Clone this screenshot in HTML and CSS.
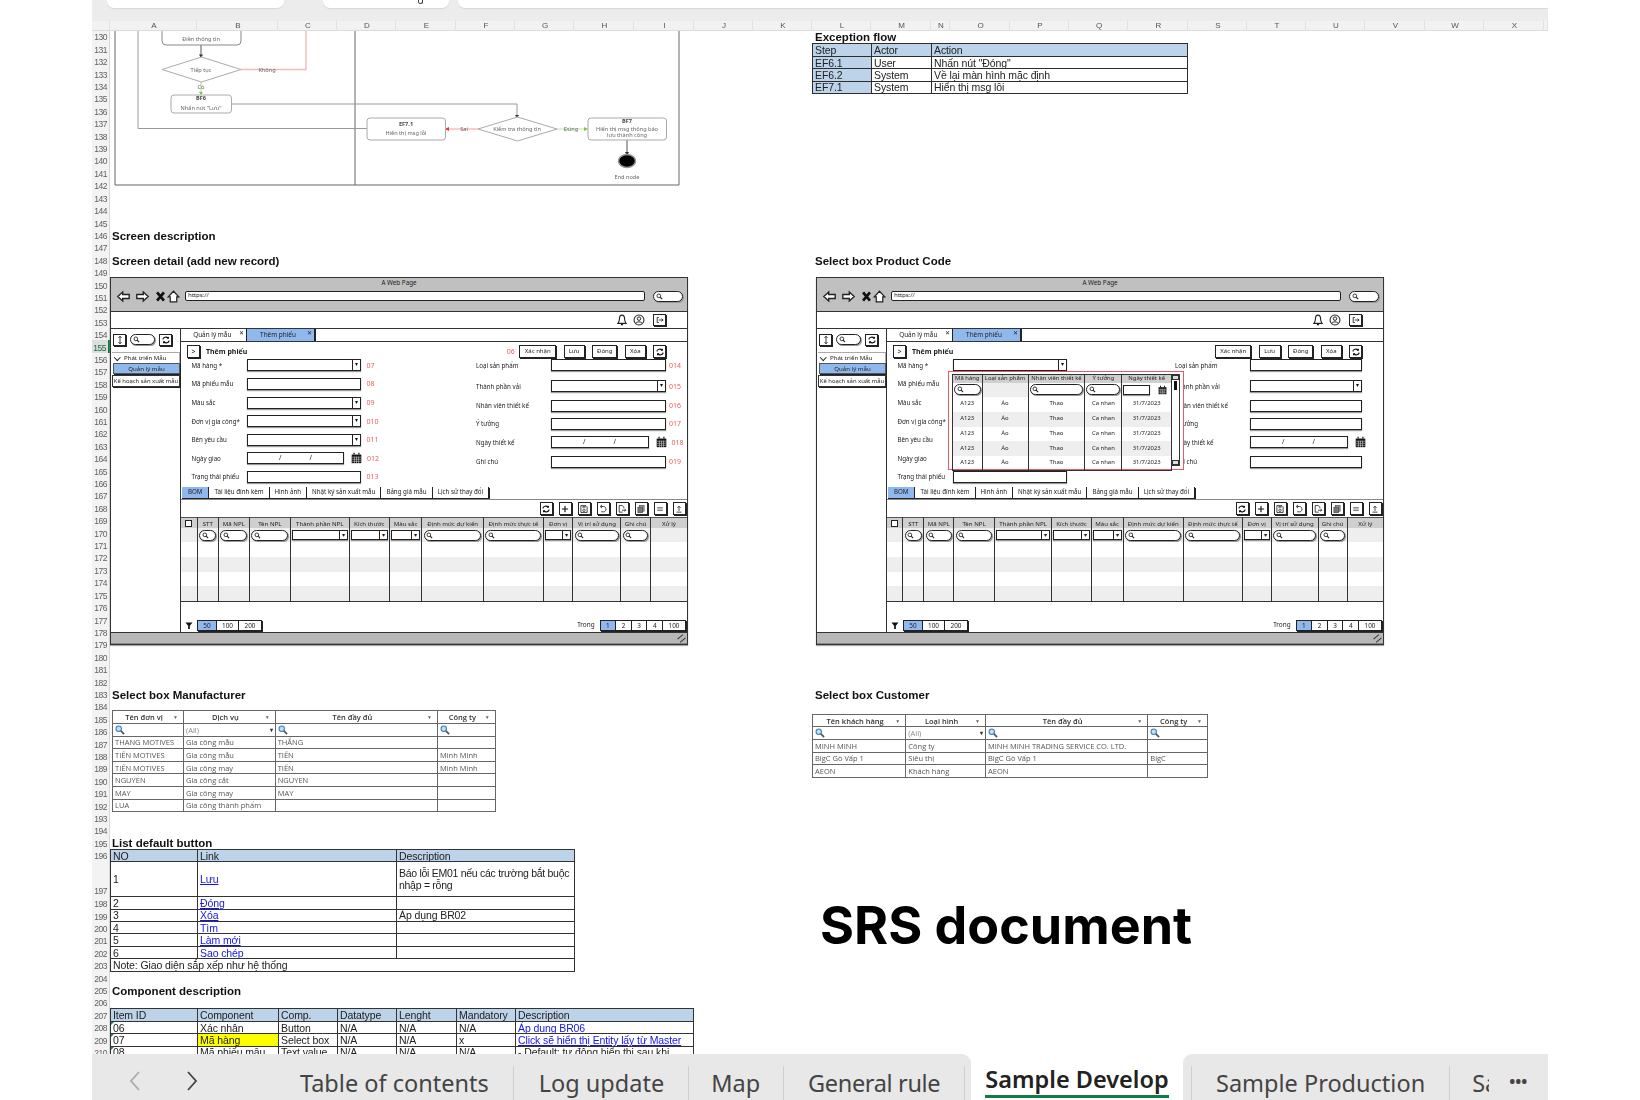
FILE: index.html
```html
<!DOCTYPE html>
<html lang="vi">
<head>
<meta charset="utf-8">
<title>SRS document</title>
<link rel="stylesheet" href="styles.css">
</head>
<body>
<svg class="sprite" xmlns="http://www.w3.org/2000/svg">
  <symbol id="i-left" viewBox="0 0 16 16"><path d="M1 8 7 2.500V5.500H15V10.500H7V13.500Z" fill="#fff" stroke="#222" stroke-width="1.700"/></symbol>
  <symbol id="i-right" viewBox="0 0 16 16"><path d="M15 8 9 2.500V5.500H1V10.500H9V13.500Z" fill="#fff" stroke="#222" stroke-width="1.700"/></symbol>
  <symbol id="i-x" viewBox="0 0 16 16"><path d="M3 2 13 14M13 2 3 14" stroke="#111" stroke-width="4" fill="none"/></symbol>
  <symbol id="i-home" viewBox="0 0 16 16"><path d="M8 1.500 14.500 8.500H12V14.500H4V8.500H1.500Z" fill="#fff" stroke="#222" stroke-width="1.500"/></symbol>
  <symbol id="i-search" viewBox="0 0 16 16"><circle cx="6.500" cy="6.500" r="4.200" fill="none" stroke="#222" stroke-width="2"/><path d="M9.500 9.500 14 14" stroke="#222" stroke-width="2.600"/></symbol>
  <symbol id="i-bell" viewBox="0 0 16 16"><path d="M8 1.500C5 1.500 4.500 4 4.500 7 4.500 10 3.500 11 2.500 12.500H13.500C12.500 11 11.500 10 11.500 7 11.500 4 11 1.500 8 1.500ZM6.500 14.200H9.500" fill="#fff" stroke="#222" stroke-width="1.500"/></symbol>
  <symbol id="i-user" viewBox="0 0 16 16"><circle cx="8" cy="8" r="6.600" fill="#fff" stroke="#222" stroke-width="1.400"/><circle cx="8" cy="6.200" r="2.300" fill="none" stroke="#222" stroke-width="1.300"/><path d="M3.800 12.500C5 9.800 11 9.800 12.200 12.500" fill="none" stroke="#222" stroke-width="1.300"/></symbol>
  <symbol id="i-logout" viewBox="0 0 16 16"><path d="M6 4H3.500V12H6" fill="none" stroke="#222" stroke-width="1.400"/><path d="M6 8H13M10.500 5.500 13 8 10.500 10.500" fill="none" stroke="#222" stroke-width="1.400"/></symbol>
  <symbol id="i-refresh" viewBox="0 0 16 16"><path d="M3 7C3.500 3.800 8.500 1.800 11.500 5M13 9C12.500 12.200 7.500 14.200 4.500 11" fill="none" stroke="#111" stroke-width="2"/><path d="M12.800 2.200V6H9ZM3.200 13.800V10H7Z" fill="#111"/></symbol>
  <symbol id="i-updown" viewBox="0 0 16 16"><path d="M8 2V14M5.500 4.500 8 2 10.500 4.500M5.500 11.500 8 14 10.500 11.500" fill="none" stroke="#222" stroke-width="1.400"/></symbol>
  <symbol id="i-cal" viewBox="0 0 16 16"><path d="M1 3H15V15.500H1Z" fill="#111"/><path d="M4.500 .5V3M11.500 .5V3" stroke="#111" stroke-width="1.800"/><path d="M1.500 6.800H14.500M1.500 9.800H14.500M1.500 12.800H14.500M5 6V15.500M8 6V15.500M11 6V15.500" stroke="#ddd" stroke-width=".8"/></symbol>
  <symbol id="i-plus" viewBox="0 0 16 16"><path d="M8 3V13M3 8H13" stroke="#111" stroke-width="1.800"/></symbol>
  <symbol id="i-save" viewBox="0 0 16 16"><path d="M3 2.500H11L13 4.500V13.500H3Z" fill="none" stroke="#222" stroke-width="1.300"/><rect x="5.500" y="2.500" width="5" height="3.500" fill="#666"/><circle cx="8" cy="10" r="2" fill="none" stroke="#222" stroke-width="1.200"/></symbol>
  <symbol id="i-undo" viewBox="0 0 16 16"><path d="M4.500 4H9C14 4 14 12.500 9 12.500H5" fill="none" stroke="#222" stroke-width="1.300"/><path d="M6.500 1.500 3.500 4 6.500 6.500" fill="none" stroke="#222" stroke-width="1.300"/></symbol>
  <symbol id="i-export" viewBox="0 0 16 16"><path d="M9 13H3.500V2.500H8.500L11 5V7" fill="none" stroke="#222" stroke-width="1.300"/><path d="M8 10H14M12 8 14 10 12 12" fill="none" stroke="#222" stroke-width="1.300"/></symbol>
  <symbol id="i-copy" viewBox="0 0 16 16"><rect x="5.500" y="2.500" width="7.500" height="9" fill="#999" stroke="#444"/><rect x="3" y="5" width="7.500" height="9" fill="#777" stroke="#444"/></symbol>
  <symbol id="i-list" viewBox="0 0 16 16"><path d="M3.500 5.500H12.500M3.500 8H12.500M3.500 10.500H12.500" stroke="#777" stroke-width="1.500"/></symbol>
  <symbol id="i-up" viewBox="0 0 16 16"><path d="M8 11V3.500M5.500 6 8 3.500 10.500 6M4 13H12" fill="none" stroke="#222" stroke-width="1.300"/></symbol>
  <symbol id="i-funnel" viewBox="0 0 16 16"><path d="M1 2H15L9.700 8.500V15H6.300V8.500Z" fill="#111"/></symbol>
  <symbol id="i-mag" viewBox="0 0 16 16"><circle cx="6" cy="6" r="4.300" fill="#bfe0f5" stroke="#3f7fb8" stroke-width="1.700"/><path d="M9.500 9.500 14.500 14.500" stroke="#555" stroke-width="2.800"/></symbol>
</svg>

<div class="frame">
  <div class="ribbon">
    <div class="rb-box rb-name"></div>
    <div class="rb-box rb-func"><span class="rb-mark"></span></div>
    <div class="rb-box rb-formula"></div>
  </div>

  <div class="cols">
    <span></span><span>A</span><span>B</span><span>C</span><span>D</span><span>E</span><span>F</span><span>G</span><span>H</span><span>I</span><span>J</span><span>K</span><span>L</span><span>M</span><span>N</span><span>O</span><span>P</span><span>Q</span><span>R</span><span>S</span><span>T</span><span>U</span><span>V</span><span>W</span><span>X</span><span></span>
  </div>

  <div class="sheet">
    <div class="rh">130</div><div class="rh">131</div><div class="rh">132</div><div class="rh">133</div><div class="rh">134</div><div class="rh">135</div><div class="rh">136</div><div class="rh">137</div><div class="rh">138</div><div class="rh">139</div>
    <div class="rh">140</div><div class="rh">141</div><div class="rh">142</div><div class="rh">143</div><div class="rh">144</div><div class="rh">145</div><div class="rh">146</div><div class="rh">147</div><div class="rh">148</div><div class="rh">149</div>
    <div class="rh">150</div><div class="rh">151</div><div class="rh">152</div><div class="rh">153</div><div class="rh">154</div><div class="rh rh-sel">155</div><div class="rh">156</div><div class="rh">157</div><div class="rh">158</div><div class="rh">159</div>
    <div class="rh">160</div><div class="rh">161</div><div class="rh">162</div><div class="rh">163</div><div class="rh">164</div><div class="rh">165</div><div class="rh">166</div><div class="rh">167</div><div class="rh">168</div><div class="rh">169</div>
    <div class="rh">170</div><div class="rh">171</div><div class="rh">172</div><div class="rh">173</div><div class="rh">174</div><div class="rh">175</div><div class="rh">176</div><div class="rh">177</div><div class="rh">178</div><div class="rh">179</div>
    <div class="rh">180</div><div class="rh">181</div><div class="rh">182</div><div class="rh">183</div><div class="rh">184</div><div class="rh">185</div><div class="rh">186</div><div class="rh">187</div><div class="rh">188</div><div class="rh">189</div>
    <div class="rh">190</div><div class="rh">191</div><div class="rh">192</div><div class="rh">193</div><div class="rh">194</div><div class="rh">195</div><div class="rh">196</div><div class="rh">197</div><div class="rh">198</div><div class="rh">199</div>
    <div class="rh">200</div><div class="rh">201</div><div class="rh">202</div><div class="rh">203</div><div class="rh">204</div><div class="rh">205</div><div class="rh">206</div><div class="rh">207</div><div class="rh">208</div><div class="rh">209</div>
    <div class="rh">210</div>

    <svg class="block flow" viewBox="110 31 590 160" xmlns="http://www.w3.org/2000/svg">
      <g class="fl-frame">
        <path d="M115 31V185H679V31M355 31V185"/>
      </g>
      <g class="fl-line">
        <path d="M138 31V128.500H367"/>
        <path d="M231.500 104H517V117"/>
      </g>
      <path class="fl-dark" d="M201 45V56M627 140V154"/>
      <path class="fl-pink" d="M241 69.500H306V31"/>
      <path class="fl-pink" d="M478 129H446"/>
      <path class="fl-green" d="M201 82V94M557 129H587"/>
      <path class="fl-tip" d="M199 54.500H203L201 58ZM515 115H519L517 118ZM625 152H629L627 156Z"/>
      <path class="fl-tip-g" d="M199 92H203L201 95ZM584 127V131L588 129Z"/>
      <path class="fl-tip-r" d="M449 127V131L445 129Z"/>
      <g class="fl-shape">
        <path class="fl-box-dark" d="M162 31V41Q162 45 166 45H237Q241 45 241 41V31"/>
        <path d="M162 69.500 201.500 57 241 69.500 201.500 82Z"/>
        <rect x="171" y="95" width="60.500" height="18" rx="3"/>
        <rect x="367" y="118" width="78.500" height="22" rx="3"/>
        <path d="M478 129 517.500 117 557 129 517.500 141Z"/>
        <rect x="588" y="118" width="78.500" height="22" rx="3"/>
      </g>
      <ellipse class="fl-end" cx="627" cy="161" rx="8.500" ry="6.500"/>
      <g class="fl-text">
        <text x="201" y="40.500">Điền thông tin</text>
        <text x="201" y="71.500">Tiếp tục</text>
        <text x="267" y="71.500">Không</text>
        <text x="201" y="89">Có</text>
        <text class="fl-b" x="201" y="100">BF6</text>
        <text x="201" y="110">Nhấn nút "Lưu"</text>
        <text class="fl-b" x="406" y="126">EF7.1</text>
        <text x="406" y="135">Hiển thị msg lỗi</text>
        <text x="464" y="131">Sai</text>
        <text x="517" y="131">Kiểm tra thông tin</text>
        <text x="571" y="131">Đúng</text>
        <text class="fl-b" x="627" y="122.500">BF7</text>
        <text x="627" y="131">Hiển thị msg thông báo</text>
        <text x="627" y="136.500">lưu thành công</text>
        <text x="627" y="179">End node</text>
      </g>
    </svg>

    <h3 class="block cap cap-excflow">Exception flow</h3>
    <table class="block xl t-exc">
      <colgroup><col class="w59"><col class="w60"><col></colgroup>
      <tr class="head"><td>Step</td><td>Actor</td><td>Action</td></tr>
      <tr><td class="blue">EF6.1</td><td>User</td><td>Nhấn nút "Đóng"</td></tr>
      <tr><td class="blue">EF6.2</td><td>System</td><td>Về lại màn hình mặc định</td></tr>
      <tr><td class="blue">EF7.1</td><td>System</td><td>Hiển thị msg lỗi</td></tr>
    </table>

    <h3 class="block cap cap-screen">Screen description</h3>
    <h3 class="block cap cap-detail">Screen detail (add new record)</h3>
    <h3 class="block cap cap-product">Select box Product Code</h3>

    <!-- Mockup A -->
    <section class="block mock mock-a">
      <header class="m-head">
        <div class="m-title">A Web Page</div>
        <div class="m-nav">
          <svg class="n-ic"><use href="#i-left"/></svg><svg class="n-ic"><use href="#i-right"/></svg><svg class="n-ic n-x"><use href="#i-x"/></svg><svg class="n-ic"><use href="#i-home"/></svg>
          <div class="m-url">https://</div>
          <div class="pill pill-nav"><svg class="s-ic"><use href="#i-search"/></svg></div>
        </div>
      </header>
      <div class="m-bar">
        <svg class="b-ic"><use href="#i-bell"/></svg><svg class="b-ic"><use href="#i-user"/></svg><span class="ibtn"><svg class="t-ic"><use href="#i-logout"/></svg></span>
      </div>
      <div class="m-body">
        <aside class="m-side">
          <div class="m-stools">
            <span class="ibtn"><svg class="t-ic"><use href="#i-updown"/></svg></span>
            <div class="pill pill-side"><svg class="s-ic"><use href="#i-search"/></svg></div>
            <span class="ibtn"><svg class="t-ic"><use href="#i-refresh"/></svg></span>
          </div>
          <div class="tree">
            <div class="tr-i tr-root">Phát triển Mẫu</div>
            <div class="tr-i tr-on">Quản lý mẫu</div>
            <div class="tr-i tr-last">Kế hoạch sản xuất mẫu</div>
          </div>
        </aside>
        <main class="m-main">
          <div class="m-tabs">
            <div class="m-tab">Quản lý mẫu<span class="m-x">✕</span></div>
            <div class="m-tab m-tab-on">Thêm phiếu<span class="m-x">✕</span></div>
          </div>
          <div class="m-titlerow">
            <span class="ibtn ibtn-chev">&gt;</span>
            <strong class="m-h">Thêm phiếu</strong>
            <div class="m-actions">
              <span class="tg tg-06">06</span>
              <span class="tbtn">Xác nhận</span><span class="tbtn">Lưu</span><span class="tbtn">Đóng</span><span class="tbtn">Xóa</span>
              <span class="ibtn"><svg class="t-ic"><use href="#i-refresh"/></svg></span>
            </div>
          </div>
          <div class="m-form">
            <div class="f-col f-left">
              <div class="fr"><label class="fl">Mã hàng *</label><div class="fi sel"></div><span class="tg">07</span></div>
              <div class="fr"><label class="fl">Mã phiếu mẫu</label><div class="fi"></div><span class="tg">08</span></div>
              <div class="fr"><label class="fl">Màu sắc</label><div class="fi sel"></div><span class="tg">09</span></div>
              <div class="fr"><label class="fl">Đơn vị gia công*</label><div class="fi sel"></div><span class="tg">010</span></div>
              <div class="fr"><label class="fl">Bên yêu cầu</label><div class="fi sel"></div><span class="tg">011</span></div>
              <div class="fr"><label class="fl">Ngày giao</label><div class="fi date"><i>/</i><i>/</i></div><svg class="cal"><use href="#i-cal"/></svg><span class="tg">012</span></div>
              <div class="fr"><label class="fl">Trạng thái phiếu</label><div class="fi"></div><span class="tg">013</span></div>
            </div>
            <div class="f-col f-right">
              <div class="fr"><label class="fl">Loại sản phẩm</label><div class="fi"></div><span class="tg">014</span></div>
              <div class="fr"><label class="fl">Thành phần vải</label><div class="fi sel"></div><span class="tg">015</span></div>
              <div class="fr"><label class="fl">Nhân viên thiết kế</label><div class="fi"></div><span class="tg">016</span></div>
              <div class="fr"><label class="fl">Ý tưởng</label><div class="fi"></div><span class="tg">017</span></div>
              <div class="fr"><label class="fl">Ngày thiết kế</label><div class="fi date"><i>/</i><i>/</i></div><svg class="cal"><use href="#i-cal"/></svg><span class="tg">018</span></div>
              <div class="fr"><label class="fl">Ghi chú</label><div class="fi"></div><span class="tg">019</span></div>
            </div>
          </div>
          <div class="m-stabs"><span class="st st-on">BOM</span><span class="st">Tài liệu đính kèm</span><span class="st">Hình ảnh</span><span class="st">Nhật ký sản xuất mẫu</span><span class="st">Bảng giá mẫu</span><span class="st">Lịch sử thay đổi</span></div>
          <div class="m-tools">
            <span class="ibtn"><svg class="t-ic"><use href="#i-refresh"/></svg></span><span class="ibtn"><svg class="t-ic"><use href="#i-plus"/></svg></span><span class="ibtn"><svg class="t-ic"><use href="#i-save"/></svg></span><span class="ibtn"><svg class="t-ic"><use href="#i-undo"/></svg></span><span class="ibtn"><svg class="t-ic"><use href="#i-export"/></svg></span><span class="ibtn"><svg class="t-ic"><use href="#i-copy"/></svg></span><span class="ibtn"><svg class="t-ic"><use href="#i-list"/></svg></span><span class="ibtn"><svg class="t-ic"><use href="#i-up"/></svg></span>
          </div>
          <table class="dg">
            <colgroup><col class="c1"><col class="c2"><col class="c3"><col class="c4"><col class="c5"><col class="c6"><col class="c7"><col class="c8"><col class="c9"><col class="c10"><col class="c11"><col class="c12"><col></colgroup>
            <tr class="dg-h"><td><span class="chk"></span></td><td>STT</td><td>Mã NPL</td><td>Tên NPL</td><td>Thành phần NPL</td><td>Kích thước</td><td>Màu sắc</td><td>Định mức dự kiến</td><td>Định mức thực tế</td><td>Đơn vị</td><td>Vị trí sử dụng</td><td>Ghi chú</td><td>Xử lý</td></tr>
            <tr class="dg-f"><td></td><td><div class="pill"><svg class="s-ic"><use href="#i-search"/></svg></div></td><td><div class="pill"><svg class="s-ic"><use href="#i-search"/></svg></div></td><td><div class="pill"><svg class="s-ic"><use href="#i-search"/></svg></div></td><td><div class="fi sel"></div></td><td><div class="fi sel"></div></td><td><div class="fi sel"></div></td><td><div class="pill"><svg class="s-ic"><use href="#i-search"/></svg></div></td><td><div class="pill"><svg class="s-ic"><use href="#i-search"/></svg></div></td><td><div class="fi sel"></div></td><td><div class="pill"><svg class="s-ic"><use href="#i-search"/></svg></div></td><td><div class="pill"><svg class="s-ic"><use href="#i-search"/></svg></div></td><td></td></tr>
            <tr class="dg-r"><td></td><td></td><td></td><td></td><td></td><td></td><td></td><td></td><td></td><td></td><td></td><td></td><td></td></tr>
            <tr class="dg-r dg-alt"><td></td><td></td><td></td><td></td><td></td><td></td><td></td><td></td><td></td><td></td><td></td><td></td><td></td></tr>
            <tr class="dg-r"><td></td><td></td><td></td><td></td><td></td><td></td><td></td><td></td><td></td><td></td><td></td><td></td><td></td></tr>
            <tr class="dg-r dg-alt"><td></td><td></td><td></td><td></td><td></td><td></td><td></td><td></td><td></td><td></td><td></td><td></td><td></td></tr>
          </table>
          <div class="m-pager">
            <svg class="funnel"><use href="#i-funnel"/></svg>
            <div class="pg"><span class="pg-on pg-w">50</span><span class="pg-w">100</span><span class="pg-w">200</span></div>
            <span class="pg-l">Trong</span>
            <div class="pg"><span class="pg-on">1</span><span>2</span><span>3</span><span>4</span><span class="pg-w">100</span></div>
          </div>
        </main>
      </div>
      <footer class="m-foot"><span class="m-grip"></span></footer>
    </section>

    <!-- Mockup B -->
    <section class="block mock mock-b">
      <header class="m-head">
        <div class="m-title">A Web Page</div>
        <div class="m-nav">
          <svg class="n-ic"><use href="#i-left"/></svg><svg class="n-ic"><use href="#i-right"/></svg><svg class="n-ic n-x"><use href="#i-x"/></svg><svg class="n-ic"><use href="#i-home"/></svg>
          <div class="m-url">https://</div>
          <div class="pill pill-nav"><svg class="s-ic"><use href="#i-search"/></svg></div>
        </div>
      </header>
      <div class="m-bar">
        <svg class="b-ic"><use href="#i-bell"/></svg><svg class="b-ic"><use href="#i-user"/></svg><span class="ibtn"><svg class="t-ic"><use href="#i-logout"/></svg></span>
      </div>
      <div class="m-body">
        <aside class="m-side">
          <div class="m-stools">
            <span class="ibtn"><svg class="t-ic"><use href="#i-updown"/></svg></span>
            <div class="pill pill-side"><svg class="s-ic"><use href="#i-search"/></svg></div>
            <span class="ibtn"><svg class="t-ic"><use href="#i-refresh"/></svg></span>
          </div>
          <div class="tree">
            <div class="tr-i tr-root">Phát triển Mẫu</div>
            <div class="tr-i tr-on">Quản lý mẫu</div>
            <div class="tr-i tr-last">Kế hoạch sản xuất mẫu</div>
          </div>
        </aside>
        <main class="m-main">
          <div class="m-tabs">
            <div class="m-tab">Quản lý mẫu<span class="m-x">✕</span></div>
            <div class="m-tab m-tab-on">Thêm phiếu<span class="m-x">✕</span></div>
          </div>
          <div class="m-titlerow">
            <span class="ibtn ibtn-chev">&gt;</span>
            <strong class="m-h">Thêm phiếu</strong>
            <div class="m-actions">
              <span class="tbtn">Xác nhận</span><span class="tbtn">Lưu</span><span class="tbtn">Đóng</span><span class="tbtn">Xóa</span>
              <span class="ibtn"><svg class="t-ic"><use href="#i-refresh"/></svg></span>
            </div>
          </div>
          <div class="m-form">
            <div class="f-col f-left">
              <div class="fr"><label class="fl">Mã hàng *</label><div class="fi sel"></div></div>
              <div class="fr"><label class="fl">Mã phiếu mẫu</label><div class="fi"></div></div>
              <div class="fr"><label class="fl">Màu sắc</label><div class="fi sel"></div></div>
              <div class="fr"><label class="fl">Đơn vị gia công*</label><div class="fi sel"></div></div>
              <div class="fr"><label class="fl">Bên yêu cầu</label><div class="fi sel"></div></div>
              <div class="fr"><label class="fl">Ngày giao</label><div class="fi date"><i>/</i><i>/</i></div></div>
              <div class="fr"><label class="fl">Trạng thái phiếu</label><div class="fi"></div></div>
            </div>
            <div class="f-col f-right">
              <div class="fr"><label class="fl">Loại sản phẩm</label><div class="fi"></div><span class="tg"></span></div>
              <div class="fr"><label class="fl">Thành phần vải</label><div class="fi sel"></div><span class="tg"></span></div>
              <div class="fr"><label class="fl">Nhân viên thiết kế</label><div class="fi"></div><span class="tg"></span></div>
              <div class="fr"><label class="fl">Ý tưởng</label><div class="fi"></div><span class="tg"></span></div>
              <div class="fr"><label class="fl">Ngày thiết kế</label><div class="fi date"><i>/</i><i>/</i></div><svg class="cal"><use href="#i-cal"/></svg><span class="tg"></span></div>
              <div class="fr"><label class="fl">Ghi chú</label><div class="fi"></div><span class="tg"></span></div>
            </div>
          </div>
          <div class="m-stabs"><span class="st st-on">BOM</span><span class="st">Tài liệu đính kèm</span><span class="st">Hình ảnh</span><span class="st">Nhật ký sản xuất mẫu</span><span class="st">Bảng giá mẫu</span><span class="st">Lịch sử thay đổi</span></div>
          <div class="m-tools">
            <span class="ibtn"><svg class="t-ic"><use href="#i-refresh"/></svg></span><span class="ibtn"><svg class="t-ic"><use href="#i-plus"/></svg></span><span class="ibtn"><svg class="t-ic"><use href="#i-save"/></svg></span><span class="ibtn"><svg class="t-ic"><use href="#i-undo"/></svg></span><span class="ibtn"><svg class="t-ic"><use href="#i-export"/></svg></span><span class="ibtn"><svg class="t-ic"><use href="#i-copy"/></svg></span><span class="ibtn"><svg class="t-ic"><use href="#i-list"/></svg></span><span class="ibtn"><svg class="t-ic"><use href="#i-up"/></svg></span>
          </div>
          <table class="dg">
            <colgroup><col class="c1"><col class="c2"><col class="c3"><col class="c4"><col class="c5"><col class="c6"><col class="c7"><col class="c8"><col class="c9"><col class="c10"><col class="c11"><col class="c12"><col></colgroup>
            <tr class="dg-h"><td><span class="chk"></span></td><td>STT</td><td>Mã NPL</td><td>Tên NPL</td><td>Thành phần NPL</td><td>Kích thước</td><td>Màu sắc</td><td>Định mức dự kiến</td><td>Định mức thực tế</td><td>Đơn vị</td><td>Vị trí sử dụng</td><td>Ghi chú</td><td>Xử lý</td></tr>
            <tr class="dg-f"><td></td><td><div class="pill"><svg class="s-ic"><use href="#i-search"/></svg></div></td><td><div class="pill"><svg class="s-ic"><use href="#i-search"/></svg></div></td><td><div class="pill"><svg class="s-ic"><use href="#i-search"/></svg></div></td><td><div class="fi sel"></div></td><td><div class="fi sel"></div></td><td><div class="fi sel"></div></td><td><div class="pill"><svg class="s-ic"><use href="#i-search"/></svg></div></td><td><div class="pill"><svg class="s-ic"><use href="#i-search"/></svg></div></td><td><div class="fi sel"></div></td><td><div class="pill"><svg class="s-ic"><use href="#i-search"/></svg></div></td><td><div class="pill"><svg class="s-ic"><use href="#i-search"/></svg></div></td><td></td></tr>
            <tr class="dg-r"><td></td><td></td><td></td><td></td><td></td><td></td><td></td><td></td><td></td><td></td><td></td><td></td><td></td></tr>
            <tr class="dg-r dg-alt"><td></td><td></td><td></td><td></td><td></td><td></td><td></td><td></td><td></td><td></td><td></td><td></td><td></td></tr>
            <tr class="dg-r"><td></td><td></td><td></td><td></td><td></td><td></td><td></td><td></td><td></td><td></td><td></td><td></td><td></td></tr>
            <tr class="dg-r dg-alt"><td></td><td></td><td></td><td></td><td></td><td></td><td></td><td></td><td></td><td></td><td></td><td></td><td></td></tr>
          </table>
          <div class="m-pager">
            <svg class="funnel"><use href="#i-funnel"/></svg>
            <div class="pg"><span class="pg-on pg-w">50</span><span class="pg-w">100</span><span class="pg-w">200</span></div>
            <span class="pg-l">Trong</span>
            <div class="pg"><span class="pg-on">1</span><span>2</span><span>3</span><span>4</span><span class="pg-w">100</span></div>
          </div>
        </main>
      </div>
      <footer class="m-foot"><span class="m-grip"></span></footer>

      <div class="popup">
        <table class="pt">
          <colgroup><col class="p1"><col class="p2"><col class="p3"><col class="p4"><col></colgroup>
          <tr class="pt-h"><td>Mã hàng</td><td>Loại sản phẩm</td><td>Nhân viên thiết kế</td><td>Ý tưởng</td><td>Ngày thiết kế</td></tr>
          <tr class="pt-f"><td><div class="pill"><svg class="s-ic"><use href="#i-search"/></svg></div></td><td class="pt-gray"></td><td><div class="pill"><svg class="s-ic"><use href="#i-search"/></svg></div></td><td><div class="pill"><svg class="s-ic"><use href="#i-search"/></svg></div></td><td><div class="pt-date"><div class="fi"></div><svg class="cal"><use href="#i-cal"/></svg></div></td></tr>
          <tr><td>A123</td><td>Áo</td><td>Thao</td><td>Ca nhan</td><td>31/7/2023</td></tr>
          <tr class="pt-alt"><td>A123</td><td>Áo</td><td>Thao</td><td>Ca nhan</td><td>31/7/2023</td></tr>
          <tr><td>A123</td><td>Áo</td><td>Thao</td><td>Ca nhan</td><td>31/7/2023</td></tr>
          <tr class="pt-alt"><td>A123</td><td>Áo</td><td>Thao</td><td>Ca nhan</td><td>31/7/2023</td></tr>
          <tr><td>A123</td><td>Áo</td><td>Thao</td><td>Ca nhan</td><td>31/7/2023</td></tr>
        </table>
        <div class="pt-scroll"><span class="sb-up"></span><span class="sb-thumb"></span><span class="sb-down"></span></div>
      </div>
    </section>

    <h3 class="block cap cap-mfr">Select box Manufacturer</h3>
    <h3 class="block cap cap-cus">Select box Customer</h3>

    <table class="block sb t-mfr">
      <colgroup><col class="m1"><col class="m2"><col class="m3"><col></colgroup>
      <tr class="sb-h"><td>Tên đơn vị<i>▼</i></td><td>Dịch vụ<i>▼</i></td><td>Tên đầy đủ<i>▼</i></td><td>Công ty<i>▼</i></td></tr>
      <tr><td><svg class="mag"><use href="#i-mag"/></svg></td><td class="sb-all">(All)<b>▾</b></td><td><svg class="mag"><use href="#i-mag"/></svg></td><td><svg class="mag"><use href="#i-mag"/></svg></td></tr>
      <tr><td>THANG MOTIVES</td><td>Gia công mẫu</td><td>THẮNG</td><td></td></tr>
      <tr><td>TIẾN MOTIVES</td><td>Gia công mẫu</td><td>TIẾN</td><td>Minh Minh</td></tr>
      <tr><td>TIẾN MOTIVES</td><td>Gia công may</td><td>TIẾN</td><td>Minh Minh</td></tr>
      <tr><td>NGUYEN</td><td>Gia công cắt</td><td>NGUYEN</td><td></td></tr>
      <tr><td>MAY</td><td>Gia công may</td><td>MAY</td><td></td></tr>
      <tr><td>LUA</td><td>Gia công thành phẩm</td><td></td><td></td></tr>
    </table>

    <table class="block sb t-cus">
      <colgroup><col class="k1"><col class="k2"><col class="k3"><col></colgroup>
      <tr class="sb-h"><td>Tên khách hàng<i>▼</i></td><td>Loại hình<i>▼</i></td><td>Tên đầy đủ<i>▼</i></td><td>Công ty<i>▼</i></td></tr>
      <tr><td><svg class="mag"><use href="#i-mag"/></svg></td><td class="sb-all">(All)<b>▾</b></td><td><svg class="mag"><use href="#i-mag"/></svg></td><td><svg class="mag"><use href="#i-mag"/></svg></td></tr>
      <tr><td>MINH MINH</td><td>Công ty</td><td>MINH MINH TRADING SERVICE CO. LTD.</td><td></td></tr>
      <tr><td>BigC Gò Vấp 1</td><td>Siêu thị</td><td>BigC Gò Vấp 1</td><td>BigC</td></tr>
      <tr><td>AEON</td><td>Khách hàng</td><td>AEON</td><td></td></tr>
    </table>

    <h3 class="block cap cap-list">List default button</h3>
    <table class="block xl t-btn">
      <colgroup><col class="w87"><col class="w199"><col></colgroup>
      <tr class="head"><td>NO</td><td>Link</td><td>Description</td></tr>
      <tr class="tall"><td>1</td><td><a href="#lu">Lưu</a></td><td class="wrap">Báo lỗi EM01 nếu các trường bắt buộc nhập = rỗng</td></tr>
      <tr><td>2</td><td><a href="#do">Đóng</a></td><td></td></tr>
      <tr><td>3</td><td><a href="#xo">Xóa</a></td><td>Áp dụng BR02</td></tr>
      <tr><td>4</td><td><a href="#ti">Tìm</a></td><td></td></tr>
      <tr><td>5</td><td><a href="#lm">Làm mới</a></td><td></td></tr>
      <tr><td>6</td><td><a href="#sc">Sao chép</a></td><td></td></tr>
      <tr><td colspan="3">Note: Giao diện sắp xếp như hệ thống</td></tr>
    </table>

    <h3 class="block cap cap-comp">Component description</h3>
    <table class="block xl t-comp">
      <colgroup><col class="w87"><col class="w81"><col class="w59"><col class="w59"><col class="w60"><col class="w59"><col></colgroup>
      <tr class="head"><td>Item ID</td><td>Component</td><td>Comp.</td><td>Datatype</td><td>Lenght</td><td>Mandatory</td><td>Description</td></tr>
      <tr><td class="tri">06</td><td>Xác nhận</td><td>Button</td><td>N/A</td><td>N/A</td><td>N/A</td><td><a href="#br">Áp dụng BR06</a></td></tr>
      <tr><td class="tri">07</td><td class="yellow">Mã hàng</td><td>Select box</td><td>N/A</td><td>N/A</td><td>x</td><td><a href="#en">Click sẽ hiển thị Entity lấy từ Master</a></td></tr>
      <tr><td class="tri">08</td><td>Mã phiếu mẫu</td><td>Text value</td><td>N/A</td><td>N/A</td><td>N/A</td><td>- Default: tự động hiển thị sau khi</td></tr>
    </table>

    <div class="srs">SRS document</div>
  </div>

  <nav class="tabbar">
    <div class="tb-left">
      <div class="tb-nav">
        <svg class="tb-arrow tb-off" viewBox="0 0 14 24"><path d="M11 3 3 12 11 21"/></svg>
        <svg class="tb-arrow" viewBox="0 0 14 24"><path d="M3 3 11 12 3 21"/></svg>
      </div>
      <span class="tb-tab">Table of contents</span>
      <span class="tb-tab">Log update</span>
      <span class="tb-tab tb-tight">Map</span>
      <span class="tb-tab tb-last">General rule</span>
    </div>
    <div class="tb-active"><span>Sample Develop</span></div>
    <div class="tb-right">
      <div class="tb-list">
        <span class="tb-tab tb-first">Sample Production</span>
        <span class="tb-tab tb-cut">Sample Test</span>
      </div>
      <div class="tb-more">•••</div>
    </div>
  </nav>
</div>
</body>
</html>
```
FILE: styles.css
```css
* { box-sizing: border-box; }
html, body { margin: 0; padding: 0; background: #fff; }
body { width: 1640px; height: 1100px; overflow: hidden; font-family: "Liberation Sans", Arial, sans-serif; }
.sprite { display: none; }

.frame { width: 1456px; height: 1100px; margin-left: 92px; display: flex; flex-direction: column; background: #fff; }

/* ribbon */
.ribbon { height: 21px; flex: none; background: #ececec; display: flex; align-items: flex-start; padding-left: 15px; gap: 0; }
.rb-box { height: 8px; background: #fff; border-radius: 0 0 7px 7px; box-shadow: 0 1px 1px #d8d8d8; }
.rb-name { width: 177px; }
.rb-func { width: 126px; margin-left: 39px; position: relative; }
.rb-mark { position: absolute; left: 95px; top: 0; width: 5px; height: 4px; border: 1.5px solid #444; border-top: 0; border-radius: 0 0 3px 3px; }
.rb-formula { flex: 1; margin-left: 9px; border-radius: 0 0 0 7px; }

/* column headers */
.cols, .sheet {
  --tracks: 18px 87px 81px 59px 59px 60px 59px 59px 60px 60px 59px 59px 59px 60px 19px 60px 59px 59px 60px 59px 59px 59px 60px 59px 60px 4px;
}
.cols { height: 10px; flex: none; display: grid; grid-template-columns: var(--tracks); background: #f2f2f2; border-bottom: 1px solid #dcdcdc; filter: blur(.35px); }
.cols span { font-size: 8px; line-height: 10px; text-align: center; color: #555; border-right: 1px solid #e2e2e2; padding-left: 2px; }

/* sheet */
.sheet {
  flex: 1; min-height: 0; overflow: hidden; display: grid;
  grid-template-columns: var(--tracks);
  grid-template-rows: 11.42px repeat(66, 12.42px) 35px 13px repeat(12, 12.42px);
  align-content: start;
}
.rh { grid-column: 1; background: #f3f3f3; color: #5f5f5f; font-size: 8.5px; letter-spacing: -.45px; line-height: 9px; padding-right: 2px; display: flex; align-items: flex-end; justify-content: flex-end; border-right: 1px solid #d8d8d8; filter: blur(.35px); }
.rh-sel { background: #dedede; color: #1c6b40; border-right: 2px solid #107c41; }
.block { margin: 0; filter: blur(.42px); }

.cap { font-size: 11.5px; line-height: 12.42px; font-weight: 700; color: #111; white-space: nowrap; padding-left: 2px; align-self: end; margin-bottom: -1.8px; }
.cap-excflow { grid-column: 13 / span 5; grid-row: 1; padding-left: 3px; margin-bottom: -1.5px; }
.cap-screen { grid-column: 2 / span 5; grid-row: 17; }
.cap-detail { grid-column: 2 / span 5; grid-row: 19; }
.cap-product { grid-column: 13 / span 5; grid-row: 19; padding-left: 3px; }
.cap-mfr { grid-column: 2 / span 5; grid-row: 54; }
.cap-cus { grid-column: 13 / span 5; grid-row: 54; padding-left: 3px; }
.cap-list { grid-column: 2 / span 5; grid-row: 66; margin-bottom: -.8px; }
.cap-comp { grid-column: 2 / span 5; grid-row: 76; }

/* flowchart */
.flow { grid-column: 2 / span 9; grid-row: 1 / span 14; width: 590px; height: 160px; align-self: start; }
.fl-frame path { fill: none; stroke: #666; stroke-width: 1; }
.fl-line path { fill: none; stroke: #999; stroke-width: 1; }
.fl-dark { fill: none; stroke: #555; stroke-width: 1; }
.fl-pink { fill: none; stroke: #f6b9b9; stroke-width: 1.4; }
.fl-green { fill: none; stroke: #bfe3a5; stroke-width: 1.2; }
.fl-tip { fill: #333; }
.fl-tip-g { fill: #77cc33; }
.fl-tip-r { fill: #ee3333; }
.fl-shape > * { fill: #fff; stroke: #aaa; stroke-width: 1; }
.fl-shape > .fl-box-dark { stroke: #888; }
.fl-end { fill: #000; stroke: #999; stroke-width: 1.5; }
.fl-text text { font-family: "Noto Sans", sans-serif; font-size: 5.6px; fill: #666; text-anchor: middle; }
.fl-text .fl-b { font-weight: 700; fill: #444; }

/* excel tables */
.xl { border-collapse: collapse; table-layout: fixed; font-size: 10.5px; letter-spacing: -.1px; color: #222; align-self: start; }
.xl td { border: 1px solid #333; padding: .5px 0 0 2px; height: 12.42px; line-height: 10.5px; white-space: nowrap; overflow: hidden; }
.xl .head td { background: #bdd3ea; }
.xl .blue { background: #bdd3ea; }
.xl a { color: #1414e6; text-decoration: underline; }
.xl .wrap { white-space: normal; line-height: 12.5px; letter-spacing: -.28px; }
.xl .yellow { background: #ffff00; }
.xl .tall td { height: 35px; }
.tri { position: relative; }
.tri::before { content: ""; position: absolute; left: 0; top: 0; border-top: 3px solid #1a8a3f; border-right: 3px solid transparent; }
.w59 { width: 59px; } .w60 { width: 60px; } .w81 { width: 81px; } .w87 { width: 87px; } .w199 { width: 199px; }
.t-exc { grid-column: 13 / span 7; grid-row: 2 / span 5; width: 376px; margin-top: 1px; }
.t-exc td { border-color: #2d2d2d; }
.t-btn { grid-column: 2 / span 7; grid-row: 67 / span 10; width: 465px; }
.t-comp { grid-column: 2 / span 9; grid-row: 78 / span 4; width: 584px; }

/* select box tables */
.sb { border-collapse: collapse; table-layout: fixed; font-family: "Open Sans", sans-serif; font-size: 7.5px; color: #555; align-self: start; }
.sb td { border: 1.2px solid #666; padding: 0 2px; height: 12.6px; line-height: 10px; white-space: nowrap; overflow: hidden; }
.sb-h td { text-align: center; color: #333; font-weight: 600; position: relative; padding-right: 10px; }
.sb-h i { position: absolute; right: 5px; top: 1px; font-style: normal; font-size: 5px; color: #666; }
.sb-all { color: #888; position: relative; }
.sb-all b { position: absolute; right: 2px; top: 1px; color: #333; font-size: 6px; }
.mag { width: 10px; height: 10px; display: block; }
.m1 { width: 71px; } .m2 { width: 91.7px; } .m3 { width: 162.3px; }
.k1 { width: 93.3px; } .k2 { width: 79.7px; } .k3 { width: 162.3px; }
.t-mfr { grid-column: 2 / span 7; grid-row: 56 / span 8; width: 383.7px; margin-top: -2px; margin-left: 2px; }
.t-cus { grid-column: 13 / span 7; grid-row: 56 / span 6; width: 396px; margin-top: 1.5px; }

/* balsamiq mockups */
.mock {
  grid-row: 21 / span 30; height: 368px; margin-top: -1.3px; align-self: start; display: flex; flex-direction: column;
  border: 1.5px solid #333; background: #fff; position: relative;
  font-family: "Noto Sans", sans-serif; font-size: 6.4px; color: #222; box-shadow: 0 1px 1px #aaa;
}
.mock-a { grid-column: 2 / span 10; width: 578px; }
.mock-b { grid-column: 13 / span 10; width: 568px; margin-left: 4px; }

.m-head { height: 34px; flex: none; background: #c0c0c0; border-bottom: 1.5px solid #333; }
.m-title { text-align: center; line-height: 9px; height: 12px; font-size: 6.3px; color: #222; }
.m-nav { display: flex; align-items: center; padding: 0 4px 0 5px; height: 13px; }
.n-ic { width: 15px; height: 13px; margin-right: 4px; flex: none; }
.n-x { width: 11px; margin-left: 1px; margin-right: 0; }
.m-url { flex: 1; height: 10px; background: #fff; border: 1.5px solid #222; border-radius: 2px; line-height: 7px; padding-left: 2px; font-size: 6px; color: #222; }
.pill { height: 11px; border: 1.5px solid #222; border-radius: 6px; background: #fff; display: flex; align-items: center; padding-left: 1.5px; box-shadow: 1px 1px 0 #999; }
.pill-nav { width: 30px; margin-left: 8px; flex: none; }
.pill-side { width: 25px; margin: 0 4px; flex: none; }
.s-ic { width: 7px; height: 7px; flex: none; }

.m-bar { height: 17px; flex: none; display: flex; align-items: center; justify-content: flex-end; gap: 5px; padding-right: 21px; border-bottom: 1.5px solid #333; }
.b-ic { width: 12px; height: 12px; flex: none; }
.m-bar .ibtn { margin-left: 3px; }
.ibtn { width: 13px; height: 12.500px; border: 1.2px solid #222; background: #fff; display: inline-flex; align-items: center; justify-content: center; box-shadow: 1px 1px 0 #222; flex: none; font-size: 7px; font-weight: 600; line-height: 1; }
.t-ic { width: 10px; height: 10px; flex: none; }

.m-body { flex: 1; min-height: 0; display: flex; }
.m-side { width: 70px; flex: none; border-right: 1.5px solid #333; padding-top: 4px; }
.m-stools { display: flex; align-items: center; padding-left: 2px; height: 14px; }
.tree { margin-top: 5px; padding-left: 1px; }
.tr-i { height: 11.300px; line-height: 10px; white-space: nowrap; font-size: 6.1px; text-align: center; }
.tr-root { text-align: left; padding-left: 12px; position: relative; border: 1px solid #aaa; border-width: 1px 1px 0 0; }
.tr-root::before { content: ""; position: absolute; left: 3px; top: 2px; width: 3.500px; height: 3.500px; border: solid #222; border-width: 0 1px 1px 0; transform: rotate(45deg); }
.tr-on { background: #8fb8ee; border: 1px solid #555; box-shadow: 1px 1px 0 #222; margin-left: 1px; }
.tr-last { border: 1px solid #333; box-shadow: 1px 1px 0 #222; margin-top: 1px; font-size: 5.9px; }

.m-main { flex: 1; min-width: 0; display: flex; flex-direction: column; }
.m-tabs { height: 13px; flex: none; display: flex; border-bottom: 1.5px solid #333; }
.m-tab { width: 65.500px; border-right: 1.2px solid #222; text-align: center; line-height: 11px; position: relative; padding-right: 2px; }
.m-tab-on { width: 68px; background: #8fb8ee; box-shadow: 1px 0 0 #222; padding-right: 4px; }
.m-x { position: absolute; right: 1.500px; top: -1px; font-size: 5.500px; line-height: 10px; }

.m-titlerow { height: 17.500px; flex: none; display: flex; align-items: center; padding: 2px 21px 0 6px; }
.ibtn-chev { font-weight: 400; }
.m-h { margin-left: 6px; font-size: 7px; font-weight: 700; color: #222; }
.m-actions { margin-left: auto; display: flex; align-items: center; gap: 7.500px; }
.tbtn { height: 12.500px; padding: 0 4px; border: 1.2px solid #222; box-shadow: 1px 1px 0 #222; line-height: 10px; background: #fff; white-space: nowrap; font-size: 6px; }
.tbtn:nth-of-type(2) { padding: 0 4.500px; }

.tg { color: #f25a5a; font-size: 7px; white-space: nowrap; line-height: 1; }
.tg-06 { margin-right: -3px; }

.m-form { height: 127.500px; flex: none; display: flex; }
.f-col { display: flex; flex-direction: column; }
.f-left { flex: 1; min-width: 0; padding-left: 10.500px; gap: 6.600px; }
.f-right { width: 211px; flex: none; gap: 6.200px; }
.mock-b .f-right { width: 208px; }
.fr { height: 12px; display: flex; align-items: center; }
.fl { flex: none; white-space: nowrap; font-size: 6.2px; width: 55.500px; }
.f-right .fl { width: 74.500px; }
.fi { height: 12px; width: 113.500px; flex: none; border: 1.3px solid #222; background: #fff; box-shadow: 0 1px 1px #999; position: relative; }
.f-right .fi { flex: 1; width: auto; min-width: 0; }
.f-left .tg { margin-left: 6px; }
.f-right .tg { width: 21px; flex: none; padding-left: 3px; }
.f-right .fr:nth-child(2) { margin-top: 2.500px; }
.f-right .fr:nth-child(3) { margin-top: 1.500px; }
.f-right .fr:nth-child(6) { margin-top: 1.500px; }
.sel::after { content: "▾"; position: absolute; right: 0; top: 0; bottom: 0; width: 7px; border-left: 1.200px solid #222; background: #fff; text-align: center; font-size: 6px; line-height: 9px; color: #111; }
.date { display: flex; justify-content: center; gap: 28px; font-size: 6.500px; line-height: 9px; }
.date i { font-style: normal; }
.f-left .date { width: 97px; }
.f-right .date { flex: none; width: 98px; }
.cal { width: 11px; height: 12px; flex: none; margin-left: 7px; }
.f-left .cal { margin-right: -1px; }
.f-right .cal + .tg { width: 20px; padding-left: 5px; }

.m-stabs { height: 12.500px; flex: none; display: flex; align-self: flex-start; border: 1px solid #222; border-width: 0 1.200px 1px 0; box-shadow: 1px 1px 0 #222; line-height: 10px; margin-left: 1px; font-size: 6.200px; }
.st { padding: 0 5px; border-right: 1px solid #222; white-space: nowrap; }
.st:last-child { border-right: 0; }
.st-on { background: #8fb8ee; padding: 0 6px; }

.m-tools { height: 17.500px; flex: none; display: flex; align-items: center; justify-content: flex-end; gap: 6px; padding-right: 1.500px; border-top: 1.200px solid #888; }

.dg { width: 100%; height: 84px; flex: none; border-collapse: collapse; table-layout: fixed; text-align: center; font-size: 6.100px; }
.dg td { border-left: 1.200px solid #333; border-right: 1.200px solid #333; padding: 0 1px; white-space: nowrap; overflow: hidden; }
.dg td:first-child { border-left: 0; }
.dg td:last-child { border-right: 0; }
.dg-h td { height: 11px; background: #cfcfcf; border-top: 1.500px solid #555; }
.dg-f td { height: 14px; background: #eee; }
.dg-r td { height: 14.700px; }
.dg-alt td { background: #eee; }
.dg-r:last-child td { border-bottom: 1.500px solid #333; }
.dg .pill { height: 11px; margin: 0 .5px; }
.dg .fi { width: 100%; height: 10px; }
.c1 { width: 3.220%; } .c2 { width: 4.150%; } .c3 { width: 6.130%; } .c4 { width: 8.100%; } .c5 { width: 11.660%; } .c6 { width: 7.900%; } .c7 { width: 6.460%; } .c8 { width: 12.150%; } .c9 { width: 11.860%; } .c10 { width: 5.830%; } .c11 { width: 9.490%; } .c12 { width: 5.830%; }
.chk { display: inline-block; width: 7px; height: 7px; border: 1px solid #222; background: #fff; vertical-align: middle; }

.m-pager { flex: 1; min-height: 0; display: flex; align-items: flex-end; padding: 0 1px 1px 4px; line-height: 10px; }
.funnel { width: 8px; height: 9px; flex: none; margin-right: 4px; margin-bottom: 1px; }
.pg { display: flex; border: 1.200px solid #222; box-shadow: 1px 1px 0 #222; height: 11px; line-height: 9px; text-align: center; }
.pg span { width: 15.600px; border-right: 1px solid #222; }
.pg span:last-child { border-right: 0; }
.pg .pg-w { width: 22px; }
.pg .pg-on { background: #8fb8ee; }
.pg .pg-on.pg-w { width: 19px; }
.pg-l { margin-left: auto; margin-right: 5px; margin-bottom: 1px; }

.m-foot { height: 12px; flex: none; background: #b8b8b8; border-top: 1.500px solid #333; position: relative; box-shadow: inset 0 -1px 0 #888; }
.m-grip { position: absolute; right: 2px; top: 3px; width: 7px; height: 5px; border-top: 1.500px solid #333; border-bottom: 1.500px solid #333; transform: rotate(-40deg); }

/* overlay inside mockup B */
.popup { position: absolute; left: 131px; top: 93.500px; width: 235.500px; height: 99px; border: 1.200px solid #e85a64; padding: 1.500px 3px 3px 3px; background: #fff; display: flex; }
.pt { flex: 1; min-width: 0; border-collapse: collapse; table-layout: fixed; text-align: center; font-size: 5.900px; border: 1.200px solid #333; }
.pt td { border-left: 1.100px solid #333; border-right: 1.100px solid #333; padding: 0 .5px; white-space: nowrap; overflow: hidden; height: 14.700px; }
.pt-h td { height: 8.500px; background: #cfcfcf; line-height: 7px; }
.pt-f td { height: 14.300px; padding: 0 1px; }
.pt-gray { background: #eee; }
.pt-alt td { background: #eee; }
.pt tr:not(.pt-h):not(.pt-f) td { line-height: 10px; padding-bottom: 2px; }
.pt .pill { height: 11px; }
.pt-date { display: flex; align-items: center; }
.pt .fi { width: 27px; height: 10px; }
.pt .cal { width: 9px; height: 10px; margin-left: 8px; }
.p1 { width: 13.500%; } .p2 { width: 21%; } .p3 { width: 26%; } .p4 { width: 16.900%; }
.pt-scroll { width: 7.600px; flex: none; border: solid #333; border-width: 1.200px 1.200px 1.200px 0; display: flex; flex-direction: column; }
.sb-up, .sb-down { height: 5px; background: #ddd; border: 1px solid #333; flex: none; }
.sb-thumb { width: 3px; height: 9px; background: #111; margin: 1px auto 0; flex: none; }
.sb-down { margin-top: auto; }

/* overlay caption */
.srs { grid-column: 13 / span 8; grid-row: 69 / span 5; align-self: center; margin: -3px 0 0 8px; font-family: Inter, sans-serif; font-weight: 700; font-size: 52px; line-height: 1; color: #000; white-space: nowrap; }

/* sheet tabs */
.tabbar { height: 46px; flex: none; display: flex; font-family: "Noto Sans", sans-serif; font-size: 23.500px; color: #444; background: #fff; }
.tb-left { display: flex; background: #e8e8e8; border-radius: 0 9px 0 0; width: 879px; flex: none; padding-right: 8px; }
.tb-nav { width: 183px; flex: none; display: flex; align-items: center; gap: 43px; padding: 8px 0 0 36px; }
.tb-arrow { width: 14px; height: 24px; fill: none; stroke: #444; stroke-width: 1.800; flex: none; }
.tb-off { stroke: #aaa; }
.tb-tab { flex: none; padding: 12px 25px 0; position: relative; white-space: nowrap; line-height: 34px; }
.tb-tab::after { content: ""; position: absolute; right: 0; top: 12px; height: 34px; width: 1px; background: #cfcfcf; }
.tb-tight { padding-left: 22px; padding-right: 24px; }
.tb-last { letter-spacing: -.35px; padding-left: 24px; }
.tb-active { width: 212px; flex: none; background: #fff; text-align: center; color: #222; font-weight: 600; line-height: 30px; padding-top: 10px; }
.tb-active span { display: inline-block; height: 34px; border-bottom: 3px solid #107c41; }
.tb-right { flex: 1; min-width: 0; display: flex; background: #e8e8e8; border-radius: 9px 0 0 0; }
.tb-list { width: 306px; flex: none; overflow: hidden; display: flex; padding-left: 8px; }
.tb-first::before { content: ""; position: absolute; left: 0; top: 12px; height: 34px; width: 1px; background: #cfcfcf; }
.tb-cut { padding-left: 22px; }
.tb-cut::after { display: none; }
.tb-more { flex: 1; text-align: center; font-size: 20px; line-height: 34px; padding-top: 11px; padding-right: 2px; color: #444; letter-spacing: -1.500px; }
```
